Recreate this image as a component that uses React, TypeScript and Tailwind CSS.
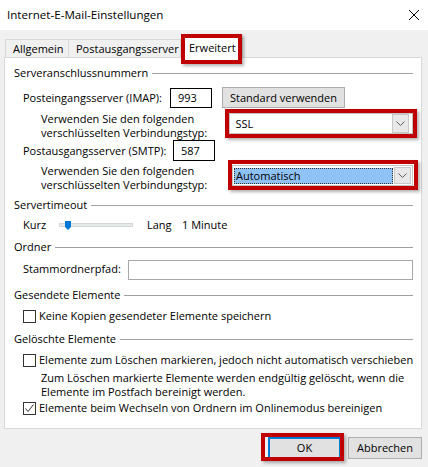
import React from "react";

const RedBox = ({ cls }: { cls: string }) => (
  <div
    className={`pointer-events-none absolute border-4 border-[#c00000] shadow-[2px_2px_3px_rgba(0,0,0,0.3)] ${cls}`}
  />
);

const Header = ({ text, mt }: { text: string; mt: string }) => (
  <div className={`flex items-center h-[14px] ${mt}`}>
    <span className="whitespace-nowrap">{text}</span>
    <div className="flex-1 h-px bg-[#a0a0a0] ml-[4px]" />
  </div>
);

const Chevron = () => (
  <svg width="9" height="5" viewBox="0 0 9 5">
    <polyline points="0.5,0.5 4.5,4.5 8.5,0.5" fill="none" stroke="#606060" strokeWidth="1" />
  </svg>
);

const CheckBox = ({ checked }: { checked?: boolean }) => (
  <div className="w-[13px] h-[13px] border border-[#333333] bg-white flex items-center justify-center shrink-0">
    {checked && (
      <svg width="11" height="11" viewBox="0 0 11 11">
        <polyline points="1.5,5.5 4,8.5 9.5,1.5" fill="none" stroke="#333333" strokeWidth="1" />
      </svg>
    )}
  </div>
);

export default function App() {
  return (
    <div className="w-[428px] h-[467px] bg-[#f0f0f0] text-[11px] text-black font-['Open_Sans','Noto_Sans',Arial,sans-serif] overflow-hidden leading-[14px]">
      {/* Title bar */}
      <div className="h-[30px] bg-white flex items-center justify-between pl-[7px] pr-[9px]">
        <span className="text-[11.6px]">Internet-E-Mail-Einstellungen</span>
        <svg width="10" height="10" viewBox="0 0 10 10">
          <line x1="0" y1="0" x2="10" y2="10" stroke="#000" strokeWidth="1" />
          <line x1="10" y1="0" x2="0" y2="10" stroke="#000" strokeWidth="1" />
        </svg>
      </div>

      {/* Tabs */}
      <div className="h-[27px] flex items-end pl-[5px]">
        <div className="w-[64px] h-[18px] border-l border-t border-r border-[#d9d9d9] flex items-center pl-[7px]">
          Allgemein
        </div>
        <div className="w-[112px] h-[18px] border-t border-r border-[#d9d9d9] flex items-center pl-[7px]">
          Postausgangsserver
        </div>
        <div className="relative z-10 w-[62px] h-[23px] -mb-[1px] bg-white border-l border-t border-r border-[#d9d9d9] flex items-start pt-[5px] pl-[7px]">
          Erweitert
          <RedBox cls="-left-[1px] -right-[0px] -top-[2px] -bottom-[6px]" />
        </div>
      </div>

      {/* Panel */}
      <div className="ml-[4px] w-[418px] h-[372px] bg-white border border-[#d9d9d9] pl-[9px] pr-[8px] flex flex-col">
        <Header text="Serveranschlussnummern" mt="mt-[8px]" />

        {/* IMAP */}
        <div className="flex items-center h-[21px] mt-[7px] pl-[9px]">
          <span className="w-[147px] whitespace-nowrap">Posteingangsserver (IMAP):</span>
          <div className="w-[42px] h-[20px] border border-black flex items-center pl-[7px]">993</div>
          <div className="ml-[10px] w-[123px] h-[21px] bg-[#e1e1e1] border border-[#adadad] flex items-center justify-center">
            Standard verwenden
          </div>
        </div>

        {/* SSL */}
        <div className="flex items-start h-[30px] mt-[1px] pl-[27px]">
          <div className="w-[188px] mt-[3px] leading-[14px] whitespace-nowrap">
            Verwenden Sie den folgenden
            <br />
            verschlüsselten Verbindungstyp:
          </div>
          <div className="relative mt-[4px] w-[185px] h-[21px] border border-[#c4c4c4] bg-white flex items-center">
            <span className="pl-[6px] flex-1">SSL</span>
            <div className="mr-[3px] w-[17px] h-[19px] bg-[#e8e8e8] border border-[#c8c8c8] flex items-center justify-center">
              <Chevron />
            </div>
            <RedBox cls="-left-[5px] -right-[5px] -top-[5px] -bottom-[5px]" />
          </div>
        </div>

        {/* SMTP */}
        <div className="flex items-center h-[21px] mt-[1px] pl-[9px]">
          <span className="w-[150px] whitespace-nowrap">Postausgangsserver (SMTP):</span>
          <div className="w-[42px] h-[21px] border border-black flex items-center pl-[7px]">587</div>
        </div>

        {/* Automatisch */}
        <div className="flex items-start h-[30px] pl-[27px]">
          <div className="w-[191px] mt-[3px] leading-[14px] whitespace-nowrap">
            Verwenden Sie den folgenden
            <br />
            verschlüsselten Verbindungstyp:
          </div>
          <div className="relative mt-[4px] w-[181px] h-[21px] border border-[#c4c4c4] bg-white flex items-center pl-[1px]">
            <div className="flex-1 h-[16px] bg-[#8fc3f7] border border-dotted border-[#333] flex items-center pl-[1px]">
              Automatisch
            </div>
            <div className="ml-[1px] mr-[1px] w-[17px] h-[17px] bg-[#e8e8e8] border border-[#c8c8c8] flex items-center justify-center">
              <Chevron />
            </div>
            <RedBox cls="-left-[5px] -right-[6px] -top-[6px] -bottom-[5px]" />
          </div>
        </div>

        <Header text="Servertimeout" mt="mt-[7px]" />

        {/* Slider */}
        <div className="flex items-center h-[14px] mt-[6px] pl-[9px]">
          <span className="w-[36px]">Kurz</span>
          <div className="relative w-[74px] h-[4px] bg-[#e7eaea] border border-[#d6d6d6]">
            <svg
              className="absolute left-[5px] -top-[3px]"
              width="6"
              height="9"
              viewBox="0 0 6 9"
            >
              <polygon points="0,0 6,0 6,6 3,9 0,6" fill="#0078d7" />
            </svg>
          </div>
          <span className="ml-[14px] w-[35px]">Lang</span>
          <span>1 Minute</span>
        </div>

        <Header text="Ordner" mt="mt-[8px]" />

        {/* Stammordnerpfad */}
        <div className="flex items-center h-[20px] mt-[6px] pl-[9px]">
          <span className="w-[105px] -mt-[2px]">Stammordnerpfad:</span>
          <div className="flex-1 h-[20px] border border-[#a8a8a8] bg-white" />
        </div>

        <Header text="Gesendete Elemente" mt="mt-[8px]" />

        <div className="flex items-center h-[14px] mt-[7px] pl-[9px]">
          <CheckBox />
          <span className="ml-[3px] whitespace-nowrap">Keine Kopien gesendeter Elemente speichern</span>
        </div>

        <Header text="Gelöschte Elemente" mt="mt-[9px]" />

        <div className="flex items-center h-[14px] mt-[7px] pl-[9px]">
          <CheckBox />
          <span className="ml-[3px] whitespace-nowrap">
            Elemente zum Löschen markieren, jedoch nicht automatisch verschieben
          </span>
        </div>

        <div className="mt-[4px] pl-[27px] leading-[14px] whitespace-nowrap">
          Zum Löschen markierte Elemente werden endgültig gelöscht, wenn die
          <br />
          Elemente im Postfach bereinigt werden.
        </div>

        <div className="flex items-center h-[14px] mt-[2px] pl-[9px]">
          <CheckBox checked />
          <span className="ml-[3px] whitespace-nowrap">
            Elemente beim Wechseln von Ordnern im Onlinemodus bereinigen
          </span>
        </div>
      </div>

      {/* Buttons */}
      <div className="ml-[4px] w-[418px] mt-[8px] flex justify-end gap-[7px]">
        <div className="relative w-[73px] h-[22px] bg-[#e1e1e1] border-2 border-[#0078d7] flex items-center justify-center">
          OK
          <RedBox cls="-left-[9px] -right-[5px] -top-[6px] -bottom-[4px]" />
        </div>
        <div className="w-[74px] h-[22px] bg-[#e1e1e1] border border-[#adadad] flex items-center justify-center">
          Abbrechen
        </div>
      </div>
    </div>
  );
}
